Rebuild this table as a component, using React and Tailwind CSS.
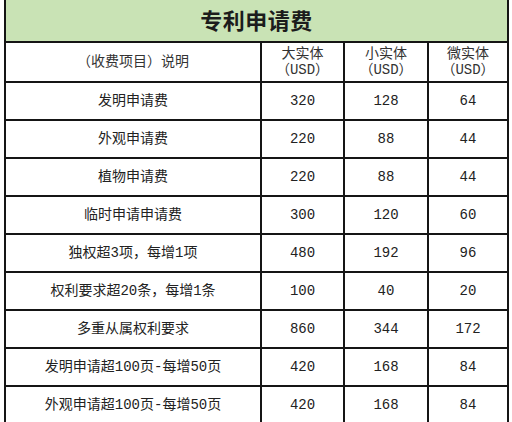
const rows = [
  ["发明申请费", "320", "128", "64"],
  ["外观申请费", "220", "88", "44"],
  ["植物申请费", "220", "88", "44"],
  ["临时申请申请费", "300", "120", "60"],
  ["独权超3项，每增1项", "480", "192", "96"],
  ["权利要求超20条，每增1条", "100", "40", "20"],
  ["多重从属权利要求", "860", "344", "172"],
  ["发明申请超100页-每增50页", "420", "168", "84"],
  ["外观申请超100页-每增50页", "420", "168", "84"],
];

const font = { fontFamily: '"Liberation Mono", "Noto Sans CJK SC", monospace' };

function Cell({ children, className = "" }) {
  return (
    <div
      className={`flex items-center justify-center border-r-2 border-b-2 border-[#151515] text-[14px] text-[#222] ${className}`}
    >
      {children}
    </div>
  );
}

// full-width bracket, kept at a full em like the reference
function P({ children }) {
  return <span className="inline-block w-[14px] text-center">{children}</span>;
}

export default function App() {
  return (
    <div className="w-[512px] h-[422px] overflow-hidden bg-white" style={font}>
      <div className="ml-[4px] w-[505px] border-l-2 border-[#151515]">
        {/* TITLE */}
        <div className="h-[43px] pt-[5px] flex items-center justify-center bg-[#c9e3b5] border-r-2 border-b-2 border-[#151515] text-[22px] font-bold text-[#1c1c1c] tracking-[0.5px]">
          专利申请费
        </div>

        <div className="grid grid-cols-[256px_83px_84px_80px]">
          {/* HEADER */}
          <Cell className="h-[40px] text-[#333]">
            <P>（</P>收费项目<P>）</P>说明
          </Cell>
          {["大实体", "小实体", "微实体"].map((h) => (
            <Cell key={h} className="h-[40px] flex-col leading-[16px] text-[#333]">
              <span>{h}</span>
              <span>
                <P>（</P>USD<P>）</P>
              </span>
            </Cell>
          ))}

          {/* ROWS */}
          {rows.map((r, i) =>
            r.map((v, j) => (
              <Cell key={`${i}-${j}`} className="h-[38px]">
                {v}
              </Cell>
            ))
          )}
        </div>
      </div>
    </div>
  );
}
